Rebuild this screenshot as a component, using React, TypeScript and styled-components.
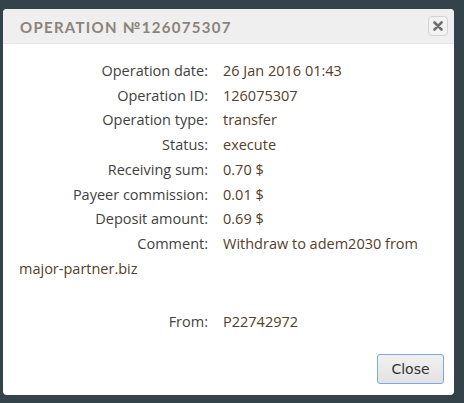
import React from "react";
import styled, { createGlobalStyle } from "styled-components";

const Global = createGlobalStyle`
  html, body { margin: 0; padding: 0; background: #344249; }
  body { width: 464px; height: 403px; overflow: hidden; }
`;

const Page = styled.div`
  padding: 9px 10px 0 3px;
`;

const Dialog = styled.div`
  width: 451px;
  height: 386px;
  background: #ffffff;
  border-radius: 4px;
  display: flex;
  flex-direction: column;
  overflow: hidden;
`;

const Header = styled.div`
  height: 35px;
  background: #efefef;
  border-bottom: 1px solid #e6e6e6;
  display: flex;
  align-items: center;
  justify-content: space-between;
  padding: 0 6px 0 17px;
  box-sizing: border-box;
`;

const Title = styled.div`
  font-family: "Lato", sans-serif;
  font-size: 15px;
  font-weight: 700;
  letter-spacing: 1.3px;
  color: #8b8379;
  text-transform: uppercase;
  padding-top: 1px;
`;

const XButton = styled.button`
  width: 20px;
  height: 20px;
  padding: 0;
  border: 1px solid #d4d4d4;
  border-radius: 4px;
  background: #f2f2f2;
  display: flex;
  align-items: center;
  justify-content: center;
`;

const Body = styled.div`
  flex: 1;
  padding: 15px 16px 0 16px;
  font-family: "Open Sans", sans-serif;
  font-size: 14.5px;
  line-height: 24.7px;
  color: #3f3f3f;
`;

const Row = styled.div<{ $gap?: number }>`
  margin-top: ${(p) => p.$gap ?? 0}px;
`;

const Label = styled.span`
  display: inline-block;
  width: 189px;
  text-align: right;
  margin-right: 15px;
  color: #3f3f3f;
`;

const Value = styled.span`
  color: #54402c;
`;

const Footer = styled.div`
  display: flex;
  justify-content: flex-end;
  padding: 0 10px 11px 0;
`;

const CloseButton = styled.button`
  width: 67px;
  height: 30px;
  border: 1px solid #7ea7e3;
  border-radius: 3px;
  background: linear-gradient(#f1f1f1, #e2e2e2);
  font-family: "DejaVu Sans", Verdana, sans-serif;
  font-size: 14px;
  color: #333;
  padding: 0;
`;

const rows: [string, string][] = [
  ["Operation date:", "26 Jan 2016 01:43"],
  ["Operation ID:", "126075307"],
  ["Operation type:", "transfer"],
  ["Status:", "execute"],
  ["Receiving sum:", "0.70 $"],
  ["Payeer commission:", "0.01 $"],
  ["Deposit amount:", "0.69 $"],
  ["Comment:", "Withdraw to adem2030 from major-partner.biz"],
];

export default function App() {
  return (
    <>
      <Global />
      <Page>
        <Dialog>
          <Header>
            <Title>Operation №126075307</Title>
            <XButton aria-label="close">
              <svg width="10" height="10" viewBox="0 0 10 10">
                <path d="M1.5 1.5 L8.5 8.5 M8.5 1.5 L1.5 8.5" stroke="#6f6f6f" strokeWidth="2.6" strokeLinecap="round" />
              </svg>
            </XButton>
          </Header>
          <Body>
            {rows.map(([l, v]) => (
              <Row key={l}>
                <Label>{l}</Label>
                <Value>{v}</Value>
              </Row>
            ))}
            <Row $gap={29}>
              <Label>From:</Label>
              <Value>P22742972</Value>
            </Row>
          </Body>
          <Footer>
            <CloseButton>Close</CloseButton>
          </Footer>
        </Dialog>
      </Page>
    </>
  );
}
